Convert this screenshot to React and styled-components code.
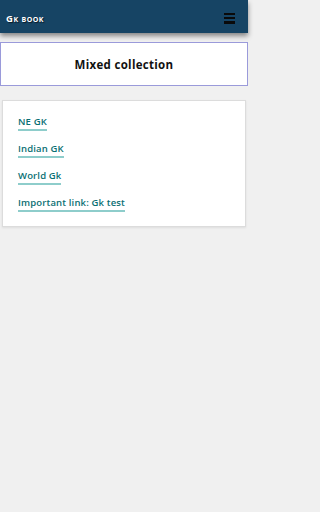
import styled, { createGlobalStyle } from "styled-components";

const GlobalStyle = createGlobalStyle`
  body {
    margin: 0;
    background-color: #f0f0f0;
    font-family: "Open Sans", "Noto Sans", sans-serif;
  }
`;

const Page = styled.div`
  width: 248px;
  min-height: 512px;
  display: flex;
  flex-direction: column;
`;

const Header = styled.header`
  height: 33px;
  background-color: #164464;
  display: flex;
  align-items: center;
  justify-content: space-between;
  padding: 0 13px 0 6px;
  box-shadow: 0 3px 5px rgba(0, 0, 0, 0.45);
`;

const Brand = styled.div`
  color: #ffffff;
  font-weight: 700;
  font-size: 9.5px;
  font-variant: small-caps;
  letter-spacing: 0.5px;
  text-shadow: 1px 1px 1px rgba(0, 0, 0, 0.6);
  padding-top: 3px;
`;

const MenuButton = styled.div`
  width: 11px;
  height: 11px;
  display: flex;
  flex-direction: column;
  justify-content: space-between;
  margin-top: 3px;

  span {
    display: block;
    height: 2.5px;
    background-color: #0a0a0a;
  }
`;

const Banner = styled.div`
  margin-top: 9px;
  height: 42px;
  background-color: #ffffff;
  border: 1px solid #9a9ada;
  display: flex;
  align-items: center;
  justify-content: center;
  font-weight: 700;
  font-size: 11.5px;
  letter-spacing: 0.3px;
  color: #111111;
`;

const Card = styled.div`
  margin: 14px 2px 0;
  background-color: #ffffff;
  border: 1px solid #dcdcdc;
  box-shadow: 0 1px 2px rgba(0, 0, 0, 0.08);
  padding: 14px 15px 14px;
  display: flex;
  flex-direction: column;
  align-items: flex-start;
  gap: 11px;
`;

const Link = styled.a`
  color: #0a6f73;
  font-size: 9.5px;
  font-weight: 600;
  letter-spacing: 0.15px;
  text-decoration: none;
  border-bottom: 2px solid #8ecdcb;
  line-height: 14px;
`;

const links = ["NE GK", "Indian GK", "World Gk", "Important link: Gk test"];

const App = () => (
  <Page>
    <GlobalStyle />
    <Header>
      <Brand>Gk book</Brand>
      <MenuButton>
        <span />
        <span />
        <span />
      </MenuButton>
    </Header>
    <Banner>Mixed collection</Banner>
    <Card>
      {links.map((label) => (
        <Link key={label} href="#">
          {label}
        </Link>
      ))}
    </Card>
  </Page>
);

export default App;
